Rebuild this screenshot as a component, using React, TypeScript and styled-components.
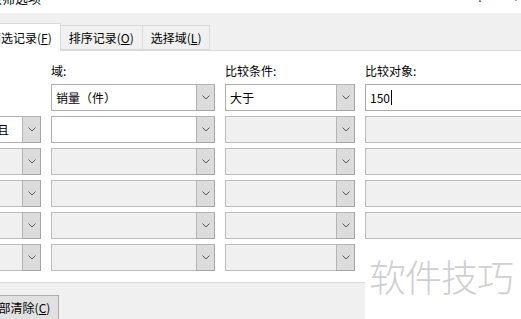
import styled, { createGlobalStyle } from 'styled-components';

const GlobalStyle = createGlobalStyle`
  body {
    margin: 0;
    background: #fff;
    overflow: hidden;
    font-family: 'Noto Sans CJK SC', 'Liberation Sans', sans-serif;
  }
`;

const Dialog = styled.div`
  width: 521px;
  height: 319px;
  position: relative;
  overflow: hidden;
  display: flex;
  flex-direction: column;
  font-size: 12px;
  color: #000;
`;

const TitleBar = styled.div`
  height: 13px;
  flex: none;
  display: flex;
  justify-content: space-between;
  overflow: hidden;
  background: #fff;
`;

const Title = styled.span`
  margin: -10px 0 0 -24px;
  font-size: 13px;
  line-height: 16px;
`;

const TitleMarks = styled.span`
  margin-top: -10px;
  font-size: 12px;
  line-height: 14px;
  display: flex;
  gap: 30px;
  margin-right: -4px;
  color: #333;
`;

const TabStrip = styled.div`
  height: 37px;
  flex: none;
  display: flex;
  align-items: flex-end;
  background: #f0f0f0;
  margin-left: -20px;
`;

const Tab = styled.div<{ $active?: boolean }>`
  height: ${(p) => (p.$active ? 28 : 25)}px;
  padding: 0 8px;
  display: flex;
  align-items: center;
  box-sizing: border-box;
  background: ${(p) => (p.$active ? '#fff' : '#f0f0f0')};
  border: 1px solid #d9d9d9;
  border-bottom: ${(p) => (p.$active ? 'none' : '1px solid #d9d9d9')};
  border-left: ${(p) => (p.$active ? '1px solid #d9d9d9' : 'none')};
  margin-bottom: ${(p) => (p.$active ? -1 : 0)}px;
  position: relative;
  white-space: nowrap;
  line-height: 14px;
`;

const Panel = styled.div`
  height: 233px;
  flex: none;
  box-sizing: border-box;
  background: #fff;
  border-top: 1px solid #d9d9d9;
  border-bottom: 1px solid #dadada;
  padding-top: 12px;
  margin-left: -30px;
`;

const Grid = styled.div`
  display: grid;
  grid-template-columns: 71px 164px 130px 170px;
  grid-auto-rows: 27px;
  grid-template-rows: 16px;
  column-gap: 10px;
  row-gap: 5px;
`;

const Label = styled.div`
  line-height: 16px;
  white-space: nowrap;
`;

const Combo = styled.div<{ $disabled?: boolean }>`
  display: flex;
  box-sizing: border-box;
  border: 1px solid #adadad;
  background: ${(p) => (p.$disabled ? '#f0f0f0' : '#fff')};
  border-color: ${(p) => (p.$disabled ? '#bcbcbc' : '#adadad')};
`;

const ComboText = styled.div<{ $indent: number }>`
  flex: 1;
  display: flex;
  align-items: center;
  padding-left: ${(p) => p.$indent}px;
  white-space: nowrap;
  overflow: hidden;
`;

const DropButton = styled.div`
  width: 17px;
  flex: none;
  display: flex;
  align-items: center;
  justify-content: center;
  margin: -1px -1px -1px 0;
  background: #dcdcdc;
  border: 1px solid #b4b4b4;
  border-right-color: #a5a5a5;
  border-bottom-color: #a5a5a5;
`;

const ValueBox = styled.div<{ $disabled?: boolean }>`
  box-sizing: border-box;
  display: flex;
  align-items: center;
  padding-left: 4px;
  border: 1px solid ${(p) => (p.$disabled ? '#bcbcbc' : '#a9a9a9')};
  background: ${(p) => (p.$disabled ? '#f0f0f0' : '#fff')};
`;

const Caret = styled.span`
  display: inline-block;
  width: 1px;
  height: 15px;
  background: #000;
  margin-left: 1px;
`;

const Footer = styled.div`
  flex: 1;
  background: #f0f0f0;
  padding-top: 12px;
  margin-left: -22px;
`;

const Button = styled.div`
  width: 81px;
  height: 25px;
  box-sizing: border-box;
  display: flex;
  align-items: center;
  justify-content: center;
  background: #e1e1e1;
  border: 1px solid #adadad;
  white-space: nowrap;
`;

const Watermark = styled.div`
  position: absolute;
  left: 365px;
  right: 0;
  top: 242px;
  bottom: 0;
  background: #fff;
  padding: 13px 0 0 4px;
  font-size: 37px;
  font-weight: 300;
  line-height: 42px;
  letter-spacing: -1px;
  color: #cfcfcf;
  white-space: nowrap;
`;

const Chevron = () => (
  <svg width="8" height="5" viewBox="0 0 8 5">
    <path d="M0.5 0.5 L4 4 L7.5 0.5" fill="none" stroke="#555" strokeWidth="1" />
  </svg>
);

const ComboBox = ({
  text,
  disabled,
  indent = 4,
}: {
  text?: string;
  disabled?: boolean;
  indent?: number;
}) => (
  <Combo $disabled={disabled}>
    <ComboText $indent={indent}>{text}</ComboText>
    <DropButton>
      <Chevron />
    </DropButton>
  </Combo>
);

const rows = [
  { conj: null, field: '销量（件）', cond: '大于', value: '150', on: true },
  { conj: '并且', field: '', cond: '', value: '', on: false },
  { conj: '', field: '', cond: '', value: '', on: false },
  { conj: '', field: '', cond: '', value: '', on: false },
  { conj: '', field: '', cond: '', value: '', on: false },
  { conj: '', field: '', cond: '', value: '', on: false },
];

const App = () => {
  return (
    <Dialog>
      <GlobalStyle />
      <TitleBar>
        <Title>高级筛选项</Title>
        <TitleMarks>
          <span>?</span>
          <span>×</span>
        </TitleMarks>
      </TitleBar>
      <TabStrip>
        <Tab $active>
          筛选记录(<u>F</u>)
        </Tab>
        <Tab>
          排序记录(<u>O</u>)
        </Tab>
        <Tab>
          选择域(<u>L</u>)
        </Tab>
      </TabStrip>
      <Panel>
        <Grid>
          <Label />
          <Label>域:</Label>
          <Label>比较条件:</Label>
          <Label>比较对象:</Label>
          {rows.map((r, idx) => {
            const first = idx === 0;
            return [
              r.conj === null ? (
                <div key={`c-${idx}`} />
              ) : (
                <ComboBox key={`c-${idx}`} text={r.conj} disabled={idx > 1} indent={14} />
              ),
              <ComboBox key={`f-${idx}`} text={r.field} disabled={idx > 1} />,
              <ComboBox key={`o-${idx}`} text={r.cond} disabled={!first} />,
              idx < 5 ? (
                <ValueBox key={`v-${idx}`} $disabled={!first}>
                  {r.value}
                  {first && <Caret />}
                </ValueBox>
              ) : (
                <div key={`v-${idx}`} />
              ),
            ];
          })}
        </Grid>
      </Panel>
      <Footer>
        <Button>
          全部清除(<u>C</u>)
        </Button>
      </Footer>
      <Watermark>软件技巧</Watermark>
    </Dialog>
  );
};

export default App;
